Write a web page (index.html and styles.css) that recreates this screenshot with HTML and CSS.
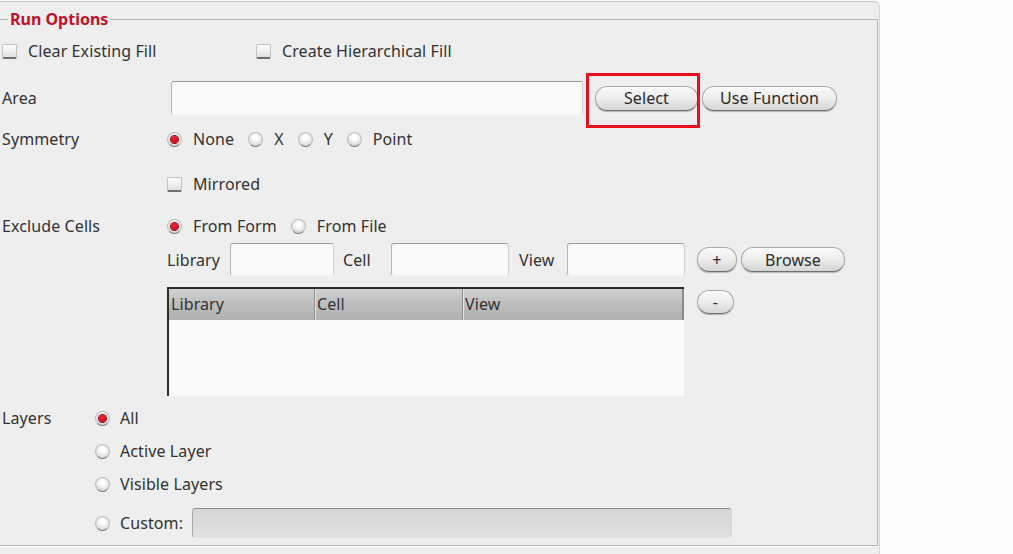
FILE: index.html
```html
<!DOCTYPE html>
<html lang="en">
<head>
    <meta charset="UTF-8">
    <title>Run Options</title>
    <link rel="stylesheet" href="styles.css">
</head>
<body>
    <div class="window">
        <fieldset class="group">
            <legend>Run Options</legend>

            <div class="row fill-row">
                <label class="check first"><span class="box"></span>Clear Existing Fill</label>
                <label class="check"><span class="box"></span>Create Hierarchical Fill</label>
            </div>

            <!-- Area -->
            <div class="field area">
                <div class="field-label">Area</div>
                <div class="field-body">
                    <div class="row area-row">
                        <div class="input area-input"></div>
                        <span class="callout"><button class="btn btn-select">Select</button></span>
                        <button class="btn btn-func">Use Function</button>
                    </div>
                </div>
            </div>

            <!-- Symmetry -->
            <div class="field sym">
                <div class="field-label">Symmetry</div>
                <div class="field-body">
                    <div class="row radios">
                        <label class="radio on"><span class="dot"></span>None</label>
                        <label class="radio"><span class="dot"></span>X</label>
                        <label class="radio"><span class="dot"></span>Y</label>
                        <label class="radio"><span class="dot"></span>Point</label>
                    </div>
                    <div class="row mirror-row">
                        <label class="check"><span class="box"></span>Mirrored</label>
                    </div>
                </div>
            </div>

            <!-- Exclude Cells -->
            <div class="field excl">
                <div class="field-label">Exclude Cells</div>
                <div class="field-body">
                    <div class="row radios">
                        <label class="radio on"><span class="dot"></span>From Form</label>
                        <label class="radio"><span class="dot"></span>From File</label>
                    </div>
                    <div class="row lib-row">
                        <span class="lbl lbl-lib">Library</span>
                        <div class="input small"></div>
                        <span class="lbl lbl-cell">Cell</span>
                        <div class="input wide"></div>
                        <span class="lbl lbl-view">View</span>
                        <div class="input wide"></div>
                        <button class="btn btn-plus">+</button>
                        <button class="btn btn-browse">Browse</button>
                    </div>
                    <div class="table-row">
                        <div class="table">
                            <div class="thead">
                                <div class="th col-lib">Library</div>
                                <div class="th col-cell">Cell</div>
                                <div class="th col-view">View</div>
                            </div>
                        </div>
                        <button class="btn btn-minus">-</button>
                    </div>
                </div>
            </div>

            <!-- Layers -->
            <div class="layers">
                <div class="field-label">Layers</div>
                <div class="layer-list">
                    <label class="radio on"><span class="dot"></span>All</label>
                    <label class="radio"><span class="dot"></span>Active Layer</label>
                    <label class="radio"><span class="dot"></span>Visible Layers</label>
                    <div class="custom-row">
                        <label class="radio custom"><span class="dot"></span>Custom:</label>
                        <div class="input custom-input"></div>
                    </div>
                </div>
            </div>
        </fieldset>
    </div>
</body>
</html>
```

FILE: styles.css
```css
* {
    margin: 0;
    padding: 0;
    box-sizing: border-box;
}

html, body {
    height: 100%;
}

body {
    background: #fbfbfb;
    font-family: "Noto Sans", sans-serif;
    font-size: 16px;
    letter-spacing: 0.1px;
    color: #323232;
    overflow: hidden;
}

.window {
    width: 880px;
    height: 553px;
    margin-top: 1px;
    padding-top: 8px;
    background: #eeeeee;
    border-top: 1px solid #c4c4c4;
    border-right: 1px solid #d6d6d6;
    border-top-right-radius: 6px;
}

/* group box */
.group {
    width: 878px;
    border: 1px solid #b4b4b4;
    border-left: none;
    padding: 8px 0 7px 2px;
    box-shadow: 0 1px 0 #ffffff;
}

.group legend {
    margin-left: 6px;
    padding: 0 2px;
    color: #c0102a;
    font-weight: bold;
    line-height: 18px;
    letter-spacing: 0;
}

.row {
    display: flex;
    align-items: center;
    height: 30px;
}

.field {
    display: flex;
}

.field-label {
    width: 165px;
    height: 30px;
    line-height: 30px;
    flex-shrink: 0;
}

.field-body {
    display: flex;
    flex-direction: column;
}

/* checkboxes */
.check {
    display: flex;
    align-items: center;
    gap: 11px;
}

.check.first {
    width: 254px;
}

.box {
    width: 15px;
    height: 15px;
    border: 1px solid #c2c2c2;
    border-bottom: 2px solid #6e6e6e;
    border-radius: 2px;
    background: linear-gradient(#fdfdfd, #e0e0e0);
}

/* radios */
.radios {
    gap: 14px;
}

.radio {
    display: flex;
    align-items: center;
    gap: 11px;
}

.dot {
    position: relative;
    flex-shrink: 0;
    width: 15px;
    height: 15px;
    border-radius: 50%;
    border: 1px solid #bcbcbc;
    border-bottom-color: #7c7c7c;
    background: radial-gradient(circle at 50% 35%, #ffffff 20%, #e4e4e4 60%, #c2c2c2);
}

.radio.on .dot::after {
    content: '';
    position: absolute;
    top: 3px;
    left: 3px;
    width: 7px;
    height: 7px;
    border-radius: 50%;
    background: radial-gradient(circle at 45% 40%, #ff2a3a, #c8001a 70%);
    box-shadow: 0 0 0 1px #8a0a14;
}

/* text inputs */
.input {
    height: 33px;
    background: #fafafa;
    border: 1px solid #cfcfcf;
    border-top-color: #9c9c9c;
    border-left-color: #b4b4b4;
    border-bottom-color: #f4f4f4;
    border-radius: 3px;
}

/* buttons */
.btn {
    height: 25px;
    font-family: inherit;
    font-size: 16px;
    letter-spacing: 0.1px;
    color: #2a2a2a;
    border: 1px solid #a9a9a9;
    border-bottom-color: #6f6f6f;
    border-radius: 12px;
    background: linear-gradient(#fbfbfb, #ececec 50%, #d6d6d6);
    box-shadow: 0 1px 1px rgba(0, 0, 0, 0.25);
}

/* Area */
.area {
    margin-top: 15px;
}

.area .field-label {
    height: 34px;
    line-height: 34px;
}

.area-row {
    height: 34px;
}

.area-input {
    width: 412px;
    height: 34px;
    margin-left: 4px;
}

.callout {
    position: relative;
    margin-left: 12px;
    display: flex;
}

/* red annotation box round the Select button */
.callout::after {
    content: '';
    position: absolute;
    top: -13px;
    left: -9px;
    right: -2px;
    bottom: -17px;
    border: 3px solid #e8101e;
}

.btn-select {
    width: 103px;
}

.btn-func {
    width: 135px;
    margin-left: 4px;
}

/* Symmetry */
.sym {
    margin-top: 9px;
}

.mirror-row {
    margin-top: 15px;
}

/* Exclude Cells */
.excl {
    margin-top: 12px;
}

.lib-row {
    height: 33px;
    margin-top: 2px;
}

.lbl-lib {
    width: 63px;
}

.lbl-cell {
    width: 57px;
    padding-left: 9px;
}

.lbl-view {
    width: 58px;
    padding-left: 10px;
}

.input.small {
    width: 104px;
}

.input.wide {
    width: 118px;
}

.btn-plus {
    width: 40px;
    margin-left: 12px;
}

.btn-browse {
    width: 104px;
    margin-left: 4px;
}

.table-row {
    display: flex;
    align-items: flex-start;
    margin-top: 11px;
}

.table {
    width: 517px;
    height: 109px;
    background: #fafafa;
    border-top: 2px solid #2c2c2c;
    border-left: 2px solid #2c2c2c;
}

.thead {
    display: flex;
    height: 31px;
    background: linear-gradient(#d2d2d2, #c0c0c0 40%, #b0b0b0);
    border-right: 2px solid #8a8a8a;
}

.th {
    line-height: 31px;
    padding-left: 2px;
    border-right: 1px solid #8c8c8c;
    box-shadow: 1px 0 0 #e6e6e6;
}

.col-lib {
    width: 146px;
}

.col-cell {
    width: 148px;
}

.col-view {
    flex: 1;
    border-right: none;
    box-shadow: none;
}

.btn-minus {
    width: 37px;
    height: 24px;
    margin: 3px 0 0 13px;
}

/* Layers */
.layers {
    display: flex;
    margin-top: 7px;
}

.layers .field-label {
    width: 93px;
}

.layer-list {
    display: flex;
    flex-direction: column;
}

.layer-list .radio {
    height: 30px;
    gap: 10px;
}

.layer-list .radio + .radio {
    margin-top: 3px;
}

.custom-row {
    display: flex;
    align-items: center;
    margin-top: 9px;
}

.radio.custom {
    width: 97px;
}

.custom-input {
    width: 540px;
    height: 30px;
    background: linear-gradient(#d6d6d6, #e0e0e0);
    border-top-color: #8a8a8a;
    border-left-color: #a8a8a8;
    border-right-color: #d8d8d8;
    border-bottom-color: #e8e8e8;
}
```
